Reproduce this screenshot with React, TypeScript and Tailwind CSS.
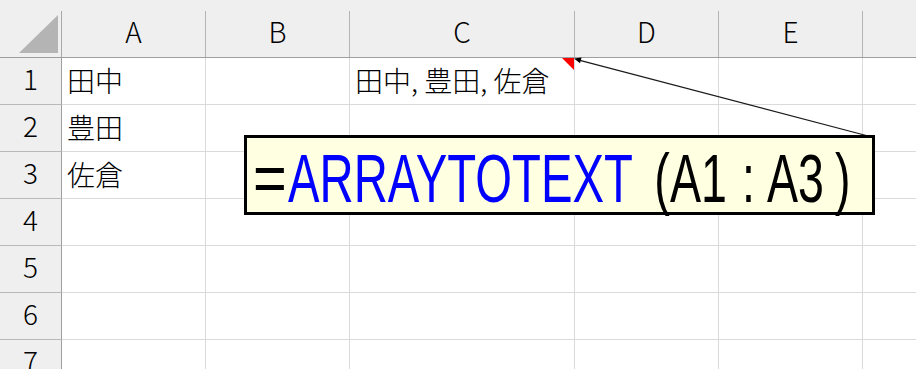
import React from "react";

const JP = { fontFamily: '"Noto Sans CJK JP", "Noto Sans", sans-serif' };
const LS = { fontFamily: '"Liberation Sans", Arial, sans-serif' };

const cols: { label: string; cls: string }[] = [
  { label: "A", cls: "w-[144px]" },
  { label: "B", cls: "w-[144px]" },
  { label: "C", cls: "w-[225px]" },
  { label: "D", cls: "w-[144px]" },
  { label: "E", cls: "w-[144px]" },
  { label: "", cls: "flex-1" },
];

const data: Record<number, Record<number, string>> = {
  1: { 0: "田中", 2: "田中, 豊田, 佐倉" },
  2: { 0: "豊田" },
  3: { 0: "佐倉" },
};

export default function App() {
  return (
    <div className="relative w-[916px] h-[369px] overflow-hidden bg-white text-black font-light" style={JP}>
      {/* Column header row */}
      <div className="flex h-[58px] bg-[#efefef] border-b border-[#9e9e9e]">
        <div className="relative w-[62px] shrink-0 pt-[11px]">
          <svg className="absolute left-0 top-0" width="62" height="57" viewBox="0 0 62 57">
            <polygon points="19,53 58,53 58,15" fill="#b4b4b4" />
          </svg>
          <div className="h-full border-r border-[#a8a8a8]" />
        </div>
        {cols.map((c, i) => (
          <div key={i} className={`${c.cls} shrink-0 pt-[11px]`}>
            <div
              className={`h-full flex items-center justify-center pb-[6px] text-[28px] leading-none ${
                i < 5 ? "border-r border-[#b4b4b4]" : ""
              }`}
            >
              {c.label}
            </div>
          </div>
        ))}
      </div>

      {/* Rows */}
      {[1, 2, 3, 4, 5, 6, 7].map((r) => (
        <div key={r} className="flex h-[47px]">
          <div className="w-[62px] shrink-0 bg-[#efefef] border-r border-b border-r-[#9e9e9e] border-b-[#b9b9b9] flex items-center justify-center pb-[6px] text-[28px] leading-none">
            {r}
          </div>
          {cols.map((c, i) => (
            <div
              key={i}
              className={`${c.cls} shrink-0 relative border-b border-[#dadada] ${
                i < 5 ? "border-r" : ""
              } flex items-center pl-[5px] pb-[2px] text-[28px] leading-none whitespace-nowrap`}
            >
              {data[r]?.[i] ?? ""}
              {r === 1 && i === 2 && (
                <svg className="absolute right-0 top-0" width="12" height="12" viewBox="0 0 12 12">
                  <polygon points="0,0 12,0 12,12" fill="#ff0000" />
                </svg>
              )}
            </div>
          ))}
        </div>
      ))}

      {/* Comment arrow */}
      <svg
        className="absolute left-0 top-0 pointer-events-none"
        width="916"
        height="369"
        viewBox="0 0 916 369"
      >
        <line x1="870" y1="136.5" x2="578" y2="59.8" stroke="#1a1a1a" strokeWidth="1.2" />
        <polygon points="574,58.6 580.0,63.3 581.6,57.4" fill="#000" />
      </svg>

      {/* Comment box */}
      <div
        className="absolute left-[244px] top-[135px] w-[631px] h-[80px] border-[3px] border-black bg-[#ffffe1] flex pt-[6px] pl-[4px] text-[68px] leading-[68px] font-normal"
        style={LS}
      >
        <div className="w-[37px] shrink-0 flex justify-center">
          <span className="inline-block shrink-0 whitespace-nowrap origin-center scale-x-[0.85]">=</span>
        </div>
        <div className="w-[346px] shrink-0 flex justify-start text-[#0000ff]">
          <span className="inline-block shrink-0 whitespace-nowrap origin-left scale-x-[0.695]">ARRAYTOTEXT</span>
        </div>
        <div className="w-[36px] shrink-0 flex justify-end">
          <span className="inline-block shrink-0 whitespace-nowrap origin-right scale-x-[0.685]">(</span>
        </div>
        <div className="w-[59px] shrink-0 flex justify-start">
          <span className="inline-block shrink-0 whitespace-nowrap origin-left scale-x-[0.685]">A1</span>
        </div>
        <div className="w-[38px] shrink-0 flex justify-center">
          <span className="inline-block shrink-0 whitespace-nowrap origin-center scale-x-[0.685]">:</span>
        </div>
        <div className="w-[68px] shrink-0 flex justify-start">
          <span className="inline-block shrink-0 whitespace-nowrap origin-left scale-x-[0.685]">A3</span>
        </div>
        <div className="w-[36px] shrink-0 flex justify-start">
          <span className="inline-block shrink-0 whitespace-nowrap origin-left scale-x-[0.685]">)</span>
        </div>
      </div>
    </div>
  );
}
